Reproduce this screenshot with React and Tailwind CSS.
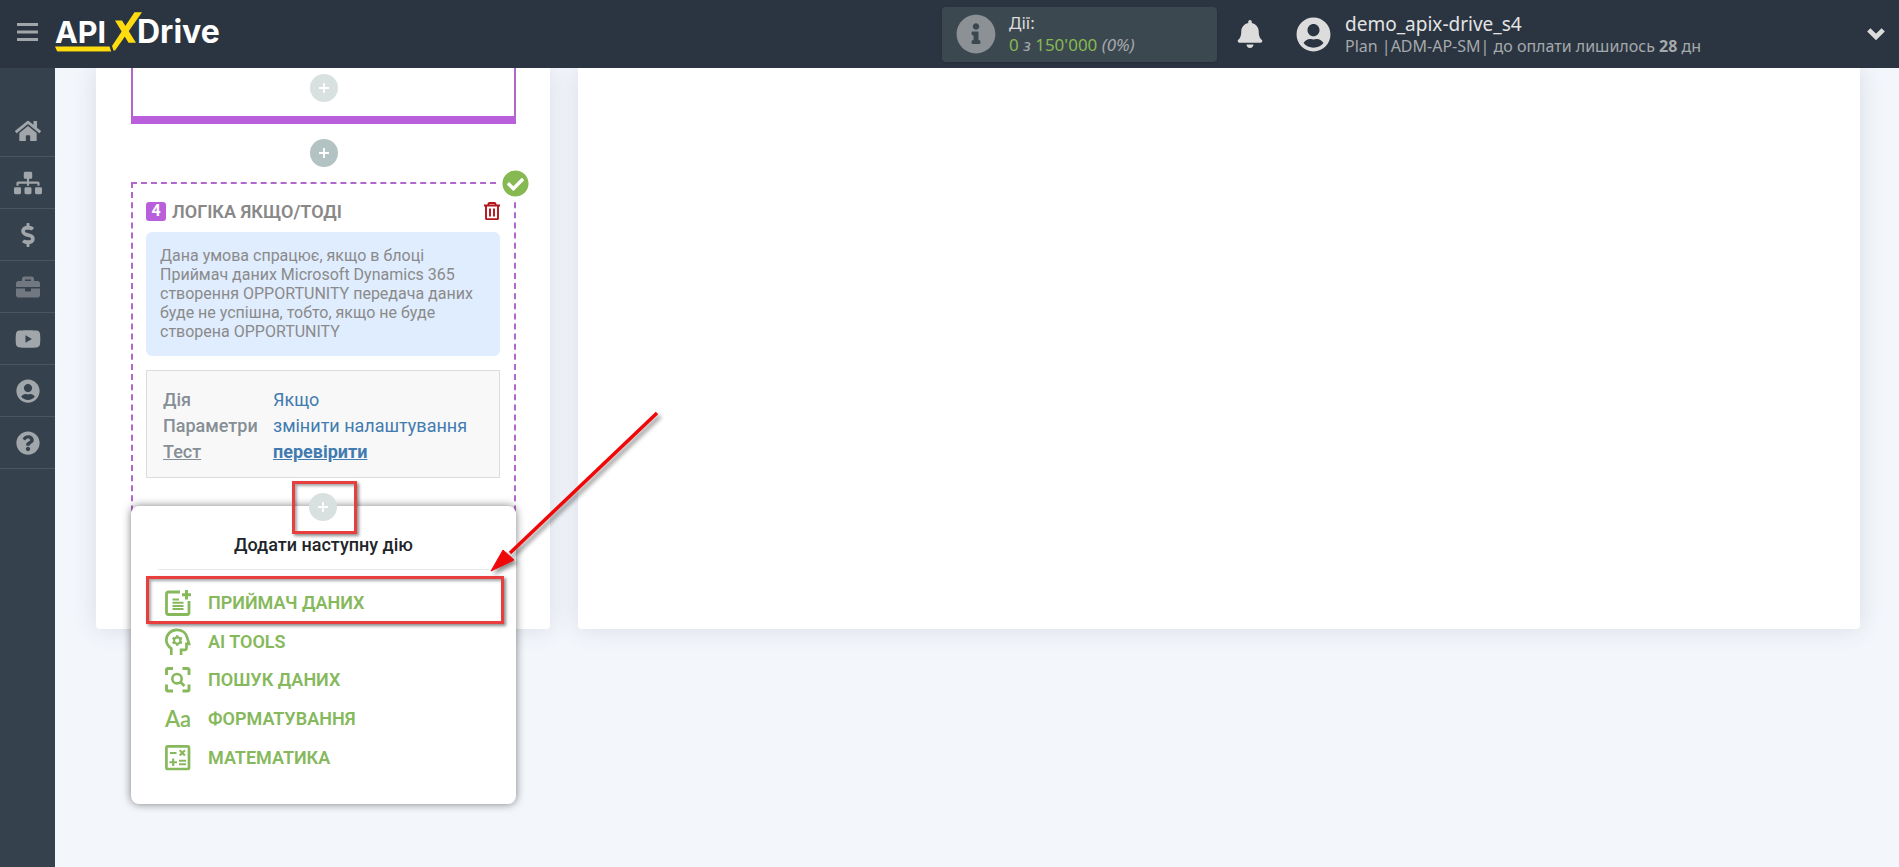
import {
  FaHome, FaSitemap, FaDollarSign, FaBriefcase, FaYoutube, FaUserCircle,
  FaQuestionCircle, FaInfoCircle, FaBell, FaCheckCircle,
} from 'react-icons/fa';

function Logo() {
  return (
    <svg viewBox="0 0 168 48" className="h-12 w-[168px]" aria-label="ApiXDrive" role="img">
      <g fill="#fff" fontFamily="Inter, 'Open Sans', sans-serif" fontWeight="700">
        <text x="0" y="32.700" fontSize="30.500">API</text>
        <text x="82" y="32.700" fontSize="32">Drive</text>
      </g>
      <path d="M0 36.500H54.500L56 41H2Z" fill="#ffdc0f" />
      <path d="M2 41H56L56.500 42H2.500Z" fill="#8a7d22" />
      <path d="M60 10.500H67L81 32.700H73.500Z" fill="#ffdc0f" />
      <path d="M79.500 2.300H87L60 40.500H58.500L57 36Z" fill="#ffdc0f" />
    </svg>
  );
}

const nav = [
  { icon: FaHome, label: 'Головна', size: 26 },
  { icon: FaSitemap, label: 'Зв’язки', size: 28 },
  { icon: FaDollarSign, label: 'Оплата', size: 24 },
  { icon: FaBriefcase, label: 'Проекти', size: 24, dim: true },
  { icon: FaYoutube, label: 'Відео', size: 26 },
  { icon: FaUserCircle, label: 'Профіль', size: 24 },
  { icon: FaQuestionCircle, label: 'Допомога', size: 24 },
];

function Header() {
  return (
    <header className="relative z-20 flex h-[68px] shrink-0 items-center bg-[#2b3541] font-['Noto_Sans','Open_Sans',sans-serif]">
      <button aria-label="Меню" className="mb-1 ml-[17px] mr-[17px] text-[#a1a6ab]">
        <svg width="21" height="18" viewBox="0 0 21 18" fill="currentColor">
          <path d="M0 0h21v3H0zM0 7.500h21v3H0zM0 15h21v3H0z" />
        </svg>
      </button>
      <a href="#" className="flex">
        <Logo />
      </a>
      <div className="flex-1" />
      <div className="flex h-[55px] w-[275px] items-center gap-[13px] rounded bg-[#3c4850] pl-[14px] shadow-sm">
        <FaInfoCircle size={40} className="text-[#8b9195]" />
        <div className="text-[17px] leading-[22px]">
          <div className="text-[#dcdcdc]">Дії:</div>
          <div className="italic text-[#a5a9ac]">
            <span className="not-italic text-[#86b951]">0</span> з <span className="not-italic text-[#86b951]">150'000</span> (0%)
          </div>
        </div>
      </div>
      <button aria-label="Сповіщення" className="ml-[19px] text-[#dcdcdc]">
        <FaBell size={28} />
      </button>
      <button className="ml-8 flex w-[603px] items-center gap-[14px] pr-[14px] text-left">
        <FaUserCircle size={35} className="text-[#dcdcdc]" />
        <span className="flex-1 pt-0.5">
          <span className="block text-[19px] leading-[22px] text-[#e4e4e4]">demo_apix-drive_s4</span>
          <span className="block text-base leading-[22px] text-[#a5a9ac]">
            Plan |ADM-AP-SM| до оплати лишилось <b>28</b> дн
          </span>
        </span>
        <svg width="18" height="12" viewBox="0 0 18 12" fill="none" stroke="#dcdcdc" strokeWidth="4.600">
          <path d="M1.800 1.800L9 9L16.200 1.800" />
        </svg>
      </button>
    </header>
  );
}

function Sidebar() {
  return (
    <nav className="w-[55px] shrink-0 bg-[#36414e] pt-[37px]">
      {nav.map(({ icon: Icon, label, size, dim }) => (
        <a
          key={label}
          href="#"
          aria-label={label}
          className={`flex h-13 items-center justify-center border-b border-[#4a5560] ${dim ? 'text-[#717880]' : 'text-[#a1a6ab]'}`}
        >
          <Icon size={size} />
        </a>
      ))}
    </nav>
  );
}

function Plus({ className }) {
  return (
    <button aria-label="Додати" className={`flex size-7 items-center justify-center rounded-full text-white ${className}`}>
      <svg width="10" height="10" viewBox="0 0 10 10" stroke="currentColor" strokeWidth="1.800">
        <path d="M5 0v10M0 5h10" />
      </svg>
    </button>
  );
}

function Trash() {
  return (
    <svg width="16" height="18" viewBox="0 0 16 18" fill="none" stroke="#b3151b" strokeWidth="1.900">
      <path d="M0 3.500h16M4.500 3V1.800Q4.500 1 5.500 1h5Q11.500 1 11.500 1.800V3M2 4v12.200q0 1 1 1h10q1 0 1-1V4M6 6.500v8M10 6.500v8" />
    </svg>
  );
}

function ReceiverIcon() {
  return (
    <svg width="26" height="26" viewBox="0 0 26 26" fill="none" stroke="currentColor" strokeWidth="2.800">
      <path d="M15 2H3.500Q1.500 2 1.500 4v18.500q0 2 2 2H22q2 0 2-2V11" />
      <path d="M21.500 0v9.500M17 4.700h9" strokeWidth="3" />
      <path d="M7.500 9.500H14M7.500 12.700h11M7.500 15.900h11M7.500 19.100h11" strokeWidth="2" />
    </svg>
  );
}

function AiIcon() {
  return (
    <svg width="27" height="28" viewBox="0 0 27 28" fill="none" stroke="currentColor" strokeWidth="2.800">
      <path d="M6.500 27.500v-6.800Q1.400 17.300 1.400 12.200A10.800 10.800 0 0 1 12.500 1.400c6 0 9.700 3.700 10.600 8.400L25 16h-2.700v4.200q0 2-2 2h-3.600v5.300" />
      <circle cx="12.700" cy="12.500" r="3.300" strokeWidth="2.200" />
      <path d="M12.700 7v2M12.700 16v2M7.900 9.700l1.800 1M15.700 14.200l1.800 1M7.900 15.300l1.800-1M15.700 10.700l1.800-1" strokeWidth="2.600" />
    </svg>
  );
}

function SearchIcon() {
  return (
    <svg width="26" height="26" viewBox="0 0 26 26" fill="none" stroke="currentColor" strokeWidth="2.900">
      <path d="M1.500 8V3q0-1.500 1.500-1.500H8M17.500 1.500H22.500q1.500 0 1.500 1.500V8M24 17.500v5q0 1.500-1.500 1.500h-5M8 24H3q-1.500 0-1.500-1.500v-5" />
      <circle cx="12" cy="11.700" r="4.700" strokeWidth="2.600" />
      <path d="M15.400 15.100l4 4" strokeWidth="2.800" />
    </svg>
  );
}

function FormatIcon() {
  return <span aria-hidden="true" className="w-[26px] text-center font-['Lato','Open_Sans',sans-serif] text-[22px] leading-6">Aa</span>;
}

function MathIcon() {
  return (
    <svg width="26" height="26" viewBox="0 0 26 26" fill="none" stroke="currentColor" strokeWidth="2.700">
      <rect x="1.400" y="1.400" width="22.600" height="22.600" rx="1.500" />
      <path d="M5 8h6.500M14.700 5.300l5.200 5.200M19.900 5.300l-5.200 5.200M4.500 17.300h7.500M8.200 13.600v7.500M14 15.700h7M14 19.300h7" strokeWidth="2.100" />
    </svg>
  );
}

const actions = [
  { icon: ReceiverIcon, label: 'ПРИЙМАЧ ДАНИХ' },
  { icon: AiIcon, label: 'AI TOOLS' },
  { icon: SearchIcon, label: 'ПОШУК ДАНИХ' },
  { icon: FormatIcon, label: 'ФОРМАТУВАННЯ' },
  { icon: MathIcon, label: 'МАТЕМАТИКА' },
];

function ActionMenu() {
  return (
    <div className="absolute -left-0.5 -right-0.5 top-[322px] rounded-lg bg-white px-[27px] py-[27px] shadow-[0_0_8px_rgba(0,0,0,0.5)]">
      <h3 className="border-b border-[#e8e8e8] pb-3 text-center text-lg leading-6 font-medium text-[#212529]">Додати наступну дію</h3>
      <ul className="mt-[14px] grid h-[193px] grid-rows-5">
        {actions.map(({ icon: Icon, label }) => (
          <li key={label} className="flex">
            <button className="flex w-full items-center gap-[17px] pl-[7px] text-left text-lg font-semibold text-[#86b85c]">
              <span className="flex w-[26px] shrink-0 justify-center"><Icon /></span>
              {label}
            </button>
          </li>
        ))}
      </ul>
    </div>
  );
}

function LogicBlock() {
  return (
    <section className="relative mt-[15px] h-[380px] border-2 border-dashed border-[#b168cd] pt-[17px] pr-[14px] pl-[13px]">
      <FaCheckCircle size={27} className="absolute -right-[15px] -top-[14px] box-content rounded-full bg-white text-[#86b951] ring-4 ring-white" />
      <div className="flex h-5 items-center">
        <span className="flex h-[19px] w-5 items-center justify-center rounded-[3px] bg-[#ba5fdc] text-base font-bold text-white">4</span>
        <h2 className="ml-[6px] flex-1 pt-0.5 text-lg font-semibold text-[#888]">ЛОГІКА ЯКЩО/ТОДІ</h2>
        <button aria-label="Видалити"><Trash /></button>
      </div>
      <p className="mt-[11px] rounded-md bg-[#e0edfe] px-[14px] pt-[14px] pb-[15px] text-base leading-[19px] text-[#8a8a8a]">
        Дана умова спрацює, якщо в блоці Приймач даних Microsoft Dynamics 365 створення OPPORTUNITY передача даних буде не успішна, тобто, якщо не буде створена OPPORTUNITY
      </p>
      <dl className="mt-[14px] grid grid-cols-[110px_1fr] border border-[#dcdcdc] bg-[#f8f8f8] px-4 pt-4 pb-3 text-lg leading-[26px]">
        <dt className="font-medium text-[#868e96]">Дія</dt>
        <dd><a href="#" className="text-[#427bb0]">Якщо</a></dd>
        <dt className="font-medium text-[#868e96]">Параметри</dt>
        <dd><a href="#" className="text-[#427bb0]">змінити налаштування</a></dd>
        <dt className="font-medium text-[#868e96] underline">Тест</dt>
        <dd><a href="#" className="font-bold text-[#427bb0] underline">перевірити</a></dd>
      </dl>
      <ActionMenu />
      <Plus className="absolute left-[176px] top-[309px] bg-[#d9e0e0]" />
      <div className="pointer-events-none absolute left-[159px] top-[297px] h-[53px] w-[65px] border-3 border-[#e83e3e] shadow-[2px_2px_3px_rgba(0,0,0,0.45),inset_2px_2px_3px_rgba(0,0,0,0.35)]" />
      <div className="pointer-events-none absolute left-[13px] top-[392px] h-[48px] w-[358px] border-3 border-[#e83e3e] shadow-[2px_2px_3px_rgba(0,0,0,0.45),inset_2px_2px_3px_rgba(0,0,0,0.35)]" />
      <svg className="pointer-events-none absolute left-[349px] top-[220px] drop-shadow-[3px_3px_2px_rgba(0,0,0,0.45)]" width="190" height="180" viewBox="0 0 190 180">
        <path d="M175 9L28 149" stroke="#f00808" strokeWidth="3.500" />
        <path d="M9 167L21 146L32 156Z" fill="#f00808" stroke="#f00808" />
      </svg>
    </section>
  );
}

export default function App() {
  return (
    <div className="flex h-screen flex-col overflow-hidden bg-[#f3f6fb] font-[Roboto,sans-serif]">
      <Header />
      <div className="flex min-h-0 flex-1">
        <Sidebar />
        <main className="flex min-w-0 flex-1 items-start gap-7 pl-[41px] pr-[39px]">
          <div className="relative z-10 h-[561px] w-[454px] shrink-0 rounded-b bg-white pl-[35px] pr-[34px] shadow-[0_0_24px_rgba(60,80,100,0.14)]">
            <section className="flex h-14 justify-center border-x-2 border-b-8 border-x-[#b168cd] border-b-[#ba5fdc] pt-[6px]">
              <Plus className="bg-[#d9e0e0]" />
            </section>
            <div className="mt-[15px] flex justify-center">
              <Plus className="bg-[#b3c2c2]" />
            </div>
            <LogicBlock />
          </div>
          <div className="h-[561px] flex-1 rounded-b bg-white shadow-[0_0_24px_rgba(60,80,100,0.14)]" />
        </main>
      </div>
    </div>
  );
}
